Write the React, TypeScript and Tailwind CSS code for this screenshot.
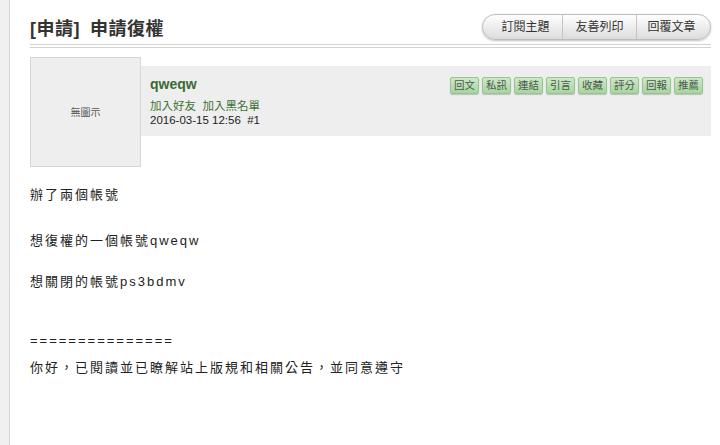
import React from 'react';

const actions = ['回文', '私訊', '連結', '引言', '收藏', '評分', '回報', '推薦'];
const topButtons = ['訂閱主題', '友善列印', '回覆文章'];

const font = "font-['Liberation_Sans','Noto_Sans_CJK_TC',sans-serif]";

export default function App() {
  return (
    <div className={`flex h-[445px] w-[720px] overflow-hidden bg-white ${font}`}>
      {/* left rail */}
      <div className="w-[10px] shrink-0 border-r border-[#d8d8d8] bg-[#f0f0f0]" />

      <div className="flex-1 pl-[20px] pr-[9px]">
        {/* header */}
        <div className="flex items-center justify-between pt-[14px]">
          <h1 className="mt-[4px] text-[18px] font-bold leading-[22px] tracking-[0.5px] text-[#333]">
            [申請]<span className="ml-[10px]">申請復權</span>
          </h1>
          <div className="flex h-[26px] overflow-hidden rounded-full border border-[#bdbdbd] bg-gradient-to-b from-[#ffffff] to-[#dcdcdc] shadow-[0_1px_2px_rgba(0,0,0,0.25)]">
            {topButtons.map((label, i) => (
              <button
                key={label}
                className={`flex items-center justify-center text-[12px] leading-none text-[#333] ${
                  i === 0 ? 'w-[79px] pl-[6px]' : i === 1 ? 'w-[74px] border-l border-[#c4c4c4]' : 'w-[74px] border-l border-[#c4c4c4] pr-[4px]'
                }`}
              >
                {label}
              </button>
            ))}
          </div>
        </div>
        <div className="mt-[4px] h-[4px] border-y border-[#d2d2d2]" />

        {/* post */}
        <div className="mt-[9px] flex items-start">
          <div className="flex h-[110px] w-[111px] shrink-0 items-center justify-center border border-[#d6d6d6] bg-[#eeeeee] text-[10px] text-[#555]">
            無圖示
          </div>
          <div className="mt-[9px] flex h-[70px] flex-1 items-start justify-between bg-[#eeeeee] pl-[9px] pr-[8px] pt-[11px]">
            <div className="-mt-[1px]">
              <div className="text-[14px] font-bold leading-[16px] text-[#3b6b33]">qweqw</div>
              <div className="mt-[7px] text-[11.5px] leading-[14px] text-[#3f7236]">
                加入好友&nbsp;&nbsp;加入黑名單
              </div>
              <div className="text-[11.5px] leading-[14px] text-[#222]">2016-03-15 12:56&nbsp;&nbsp;#1</div>
            </div>
            <div className="flex gap-[3px]">
              {actions.map((a) => (
                <span
                  key={a}
                  className="flex h-[17px] w-[29px] items-center justify-center rounded-[2px] border border-[#98c491] bg-gradient-to-b from-[#cde8c8] to-[#a8d4a1] text-[10.5px] leading-none text-[#4b5a4b] shadow-[0_1px_1px_rgba(0,0,0,0.2)]"
                >
                  {a}
                </span>
              ))}
            </div>
          </div>
        </div>

        {/* body */}
        <div className="text-[13px] leading-[20px] tracking-[2px] text-[#222]">
          <p className="mt-[18px]">辦了兩個帳號</p>
          <p className="mt-[26px]">想復權的一個帳號qweqw</p>
          <p className="mt-[21px]">想關閉的帳號ps3bdmv</p>
          <p className="mt-[39px]">===============</p>
          <p className="mt-[7px]">你好，已閱讀並已瞭解站上版規和相關公告，並同意遵守</p>
        </div>
      </div>
    </div>
  );
}
